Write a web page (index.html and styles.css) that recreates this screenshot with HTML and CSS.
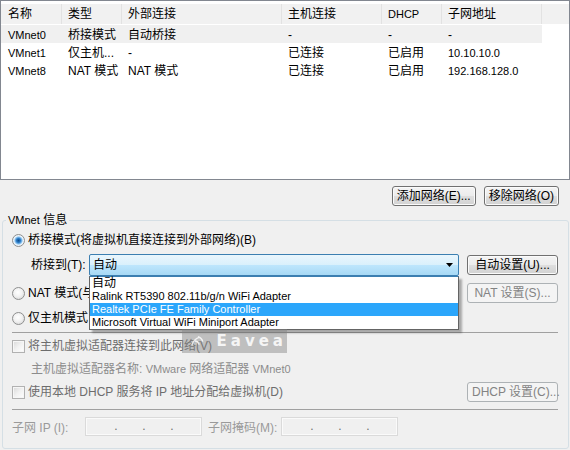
FILE: index.html
```html
<!DOCTYPE html>
<html>
<head>
    <meta charset="utf-8">
    <title>虚拟网络编辑器</title>
    <link rel="stylesheet" href="styles.css">
</head>
<body>
    <div class="net-list">
        <div class="list-head">
            <div class="cell">名称</div>
            <div class="cell">类型</div>
            <div class="cell">外部连接</div>
            <div class="cell">主机连接</div>
            <div class="cell en">DHCP</div>
            <div class="cell">子网地址</div>
            <div class="cell"></div>
        </div>
        <div class="list-row selected">
            <div class="cell en">VMnet0</div>
            <div class="cell">桥接模式</div>
            <div class="cell">自动桥接</div>
            <div class="cell">-</div>
            <div class="cell">-</div>
            <div class="cell">-</div>
        </div>
        <div class="list-row">
            <div class="cell en">VMnet1</div>
            <div class="cell">仅主机...</div>
            <div class="cell">-</div>
            <div class="cell">已连接</div>
            <div class="cell">已启用</div>
            <div class="cell en">10.10.10.0</div>
        </div>
        <div class="list-row">
            <div class="cell en">VMnet8</div>
            <div class="cell">NAT 模式</div>
            <div class="cell">NAT 模式</div>
            <div class="cell">已连接</div>
            <div class="cell">已启用</div>
            <div class="cell en">192.168.128.0</div>
        </div>
    </div>

    <div class="list-actions">
        <button class="btn">添加网络(E)...</button>
        <button class="btn">移除网络(O)</button>
    </div>

    <fieldset class="group">
        <legend><span class="en">VMnet</span> 信息</legend>

        <label class="option first">
            <span class="radio checked"></span>
            <span>桥接模式(将虚拟机直接连接到外部网络)(B)</span>
        </label>

        <div class="bridge-row">
            <span class="bridge-label">桥接到(T):</span>
            <div class="combo">
                <div class="combo-box">
                    <span>自动</span>
                    <svg class="combo-arrow" width="7" height="4" viewBox="0 0 7 4"><path d="M0 0h7L3.5 4z" fill="#000"/></svg>
                </div>
                <ul class="combo-list">
                    <li>自动</li>
                    <li class="en">Ralink RT5390 802.11b/g/n WiFi Adapter</li>
                    <li class="en active">Realtek PCIe FE Family Controller</li>
                    <li class="en">Microsoft Virtual WiFi Miniport Adapter</li>
                </ul>
            </div>
            <button class="btn side">自动设置(U)...</button>
        </div>

        <!-- the open list covers the rest of these two labels -->
        <div class="option-row">
            <label class="option">
                <span class="radio"></span>
                <span>NAT 模式(与</span>
            </label>
            <button class="btn side" disabled>NAT 设置(S)...</button>
        </div>

        <label class="option spaced">
            <span class="radio"></span>
            <span>仅主机模式</span>
        </label>

        <hr class="sep">

        <label class="option check-row disabled">
            <span class="checkbox"></span>
            <span>将主机虚拟适配器连接到此网络(V)</span>
        </label>

        <div class="adapter-name">主机虚拟适配器名称: <span class="en">VMware</span> 网络适配器 <span class="en">VMnet0</span></div>

        <div class="option-row dhcp-row">
            <label class="option disabled">
                <span class="checkbox"></span>
                <span>使用本地 DHCP 服务将 IP 地址分配给虚拟机(D)</span>
            </label>
            <button class="btn side" disabled>DHCP 设置(C)...</button>
        </div>

        <hr class="sep">

        <div class="subnet-row">
            <span class="subnet-label">子网 IP (I):</span>
            <div class="ip-field"><span>.</span><span>.</span><span>.</span></div>
            <span class="subnet-label mask">子网掩码(M):</span>
            <div class="ip-field"><span>.</span><span>.</span><span>.</span></div>
        </div>
    </fieldset>

    <div class="watermark">
        <svg width="24" height="20" viewBox="0 0 24 20"><path d="M3 17c2-6 6-11 12-13M8 10c3 0 6 2 7 6M13 3c4 1 7 4 8 8" stroke="#fff" stroke-width="2.5" fill="none" opacity="0.8"/></svg>
        <span>Eavea</span>
    </div>
</body>
</html>
```

FILE: styles.css
```css
* {
    box-sizing: border-box;
}

body {
    margin: 0;
    width: 570px;
    height: 450px;
    overflow: hidden;
    position: relative;
    background: #f0f0f0;
    font-family: "Liberation Sans", "Noto Sans CJK SC", sans-serif;
    font-size: 12px;
    color: #000;
}

.en {
    font-size: 11px;
}

/* network list */
.net-list {
    height: 180px;
    border: 1px solid #828790;
    background: #fff;
}

.list-head,
.list-row {
    display: grid;
    grid-template-columns: 61px 60px 160px 100px 60px 100px 1fr;
}

.list-head {
    height: 23px;
    padding-top: 3px;
    margin-bottom: 1px;
}

.cell {
    padding-left: 6px;
    white-space: nowrap;
    overflow: hidden;
}

.cell:first-child {
    padding-left: 7px;
}

.list-head .cell {
    height: 20px;
    line-height: 21px;
    background: #f1f1f1;
    border-right: 1px solid #e2e2e2;
}

.list-head .cell:last-child {
    border-right: 0;
}

.list-row .cell {
    height: 18px;
    line-height: 20px;
}

.list-row.selected .cell {
    background: #f0f0f0;
}

/* buttons */
.list-actions {
    display: flex;
    justify-content: flex-end;
    gap: 8px;
    margin: 6px 11px 0 0;
}

.btn {
    height: 20px;
    min-width: 74px;
    padding: 0 4px;
    border: 1px solid #707070;
    border-radius: 3px;
    background: linear-gradient(#f4f4f4 0%, #ececec 48%, #dedede 52%, #d2d2d2 100%);
    box-shadow: inset 0 0 0 1px #fbfbfb;
    font: inherit;
    line-height: 16px;
    color: #000;
    white-space: nowrap;
}

.btn:disabled {
    border-color: #adb2b5;
    background: #f4f4f4;
    box-shadow: none;
    color: #838383;
}

.btn.side {
    width: 91px;
    margin-left: auto;
}

/* VMnet info group */
.group {
    margin: 7px 1px 0 2px;
    padding: 0 10px 12px 9px;
    border: 1px solid #d5dfe5;
    border-radius: 3px;
    min-width: 0;
}

.group legend {
    margin-left: -6px;
    padding: 0 2px;
    line-height: 14px;
    height: 14px;
}

.option {
    display: flex;
    align-items: center;
    gap: 3px;
    height: 16px;
    line-height: 16px;
    white-space: nowrap;
}

.option.first {
    margin-top: 5px;
}

.option.spaced {
    margin-top: 7px;
}

.option.disabled {
    color: #6d6d6d;
}

.radio {
    flex: none;
    width: 13px;
    height: 13px;
    border: 1px solid #8e8f8f;
    border-radius: 50%;
    background: radial-gradient(circle at 45% 40%, #ffffff 0, #f2f2f2 45%, #cfcfcf 100%);
}

.radio.checked {
    background: radial-gradient(circle at 50% 50%, #0d4c8c 0, #2a79c4 2px, #86c0ee 3.5px, #e9f3fb 4.5px, #f4f4f4 100%);
}

.checkbox {
    flex: none;
    width: 13px;
    height: 13px;
    border: 1px solid #b1b1b1;
    background: linear-gradient(135deg, #d8d8d8 0%, #f1f1f1 50%, #ffffff 100%);
    box-shadow: inset 0 0 0 1px #f6f6f6;
}

.bridge-row {
    display: flex;
    align-items: center;
    height: 22px;
    margin-top: 6px;
    padding-left: 19px;
}

.bridge-label {
    width: 58px;
    line-height: 16px;
}

.combo {
    position: relative;
    width: 370px;
    height: 22px;
}

.combo-box {
    display: flex;
    align-items: center;
    justify-content: space-between;
    height: 22px;
    padding: 0 5px 0 3px;
    border: 1px solid #3c7fb1;
    border-radius: 2px;
    background: linear-gradient(#eaf6fd 0%, #d9f0fc 50%, #bee6fd 50%, #a7d9f5 100%);
    line-height: 20px;
}

.combo-list {
    position: absolute;
    top: 22px;
    left: 0;
    width: 370px;
    margin: 0;
    padding: 0;
    list-style: none;
    background: #fff;
    border: 1px solid #646464;
    border-top-color: #3c7fb1;
    box-shadow: 3px 3px 2px rgba(0, 0, 0, 0.3);
    z-index: 2;
}

.combo-list li {
    height: 13px;
    line-height: 13px;
    padding-left: 2px;
    white-space: nowrap;
}

.combo-list li.active {
    background: #2ba6fb;
    color: #fff;
}

.option-row {
    display: flex;
    align-items: center;
    height: 20px;
    margin-top: 7px;
}

.dhcp-row {
    margin-top: 5px;
}

.sep {
    height: 0;
    margin: 6px 0 0;
    border: 0;
    border-top: 1px solid #a0a0a0;
}

.dhcp-row + .sep {
    margin-top: 7px;
}

.check-row {
    margin-top: 5px;
}

.adapter-name {
    height: 16px;
    margin-top: 7px;
    padding-left: 19px;
    line-height: 16px;
    color: #8c8c8c;
    white-space: nowrap;
}

.subnet-row {
    display: flex;
    align-items: center;
    height: 19px;
    margin-top: 7px;
    color: #9a9a9a;
}

.subnet-label {
    width: 73px;
    white-space: nowrap;
}

.subnet-label.mask {
    margin-left: 6px;
}

.ip-field {
    display: flex;
    width: 117px;
    height: 19px;
    padding-left: 16px;
    border: 1px solid #dadada;
    background: #f0f0f0;
    box-shadow: inset 0 0 0 1px #fafafa;
    color: #6d6d6d;
    line-height: 16px;
}

.ip-field span {
    width: 28px;
    text-align: center;
}

/* screenshot watermark */
.watermark {
    position: absolute;
    left: 182px;
    top: 329px;
    width: 105px;
    height: 24px;
    display: flex;
    align-items: center;
    gap: 12px;
    padding-left: 8px;
    background: rgba(130, 130, 130, 0.45);
    color: rgba(255, 255, 255, 0.85);
    font: bold 15px "DejaVu Sans", sans-serif;
    letter-spacing: 4px;
    z-index: 3;
}
```
